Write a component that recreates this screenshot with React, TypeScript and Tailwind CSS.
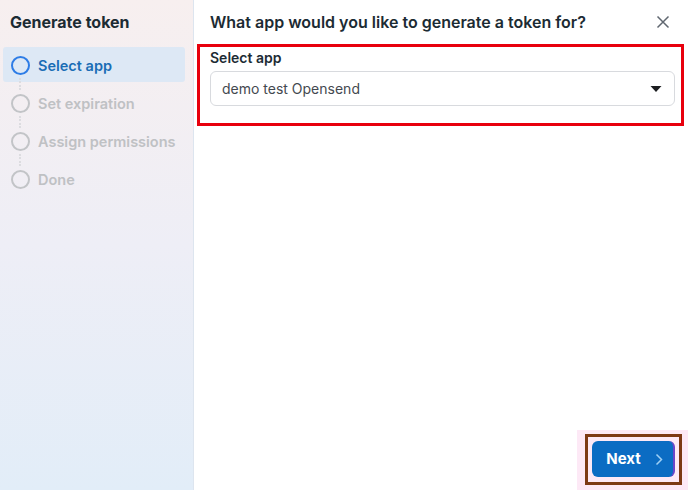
import React from "react";

const steps = ["Select app", "Set expiration", "Assign permissions", "Done"];

export default function App() {
  return (
    <div
      className="w-[688px] h-[490px] flex bg-white overflow-hidden"
      style={{ fontFamily: "Inter, 'Open Sans', 'Liberation Sans', sans-serif" }}
    >
      <aside className="w-[194px] shrink-0 bg-gradient-to-b from-[#f7efef] via-[#eeeef6] to-[#e2edf8] border-r border-[#dde5ef] flex flex-col">
        <h2 className="pl-[10px] pt-[11px] text-[16px] font-bold text-[#1c2b33] leading-[22px]">
          Generate token
        </h2>
        <div className="mt-[14px] flex flex-col pl-[3px] pr-[8px]">
          {steps.map((s, i) => {
            const active = i === 0;
            return (
              <div key={s} className="flex flex-col">
                {i > 0 && <div className="h-[3px]" />}
                <div
                  className={`relative flex items-center h-[35px] rounded-[3px] pl-[8px] gap-[8px] ${
                    active ? "bg-[#dde8f5]" : ""
                  }`}
                >
                  <div
                    className={`w-[19px] h-[19px] mt-[2px] rounded-full border-2 ${
                      active ? "border-[#2d7ce6]" : "border-[#c2c4c7]"
                    }`}
                  />
                  <span
                    className={`text-[14.5px] font-semibold mt-[2px] ${
                      active ? "text-[#1a6db5]" : "text-[#bfc1c4]"
                    }`}
                  >
                    {s}
                  </span>
                  {i < steps.length - 1 && (
                    <div className="absolute left-[16px] top-[31px] h-[12px] border-l-2 border-dotted border-[#dcdce0]" />
                  )}
                </div>
              </div>
            );
          })}
        </div>
      </aside>
      <main className="flex-1 flex flex-col">
        <div className="flex items-center justify-between pl-[16px] pr-[18px] pt-[2px] h-[42px]">
          <h1 className="text-[16px] font-semibold text-[#1c2b33]">
            What app would you like to generate a token for?
          </h1>
          <svg width="14" height="14" viewBox="0 0 14 14" className="text-[#606770]">
            <path d="M1.5 1.5 L12.5 12.5 M12.5 1.5 L1.5 12.5" stroke="currentColor" strokeWidth="1.5" fill="none" />
          </svg>
        </div>
        <div className="ml-[3px] mr-[4px] mt-[2px] border-[3px] border-[#e8000d] pl-[10px] pr-[6px] pt-[2px] pb-[17px]">
          <div className="text-[14px] font-semibold text-[#1c2b33] leading-[18px]">Select app</div>
          <div className="mt-[4px] h-[35px] rounded-[6px] border border-[#d8dade] flex items-center justify-between pl-[11px] pr-[12px]">
            <span className="text-[14px] text-[#444950]">demo test Opensend</span>
            <svg width="12" height="8" viewBox="0 0 12 8">
              <path d="M0.5 1 L11.5 1 L6 7 Z" fill="#1c1e21" />
            </svg>
          </div>
        </div>
        <div className="flex-1" />
        <div className="flex justify-end">
          <div className="bg-[#fde9f6] pl-[8px] pt-[4px] w-[111px] h-[60px]">
            <div className="w-[97px] h-[51px] border-[3px] border-[#7d3a14] p-[4px]">
              <button className="w-[83px] h-[36px] rounded-[6px] bg-[#0b6cc3] border-r-2 border-[#6b45c9] text-white text-[15px] font-bold flex items-center justify-center gap-[14px] pl-[4px]">
                Next
                <svg width="8" height="13" viewBox="0 0 8 13">
                  <path d="M1.5 1.5 L6.5 6.5 L1.5 11.5" stroke="#9fd0f5" strokeWidth="1.5" fill="none" />
                </svg>
              </button>
            </div>
          </div>
        </div>
      </main>
    </div>
  );
}
